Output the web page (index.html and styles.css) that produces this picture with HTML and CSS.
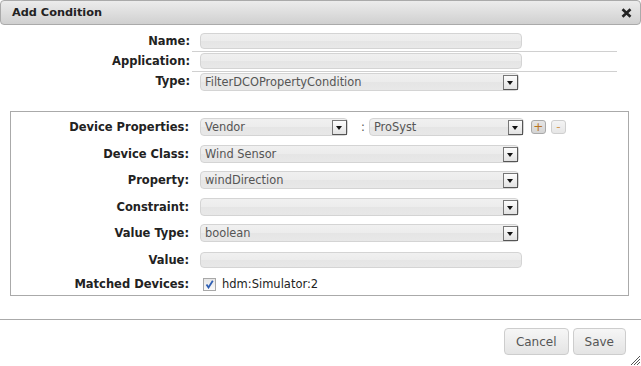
FILE: index.html
```html
<!DOCTYPE html>
<html lang="en">
<head>
  <meta charset="UTF-8" />
  <title>Add Condition</title>
  <link rel="stylesheet" href="styles.css">
</head>
<body>

<div class="dialog">

  <div class="titlebar">
    <span class="title">Add Condition</span>
    <span class="close">
      <svg width="11" height="10" viewBox="0 0 11 10"><path d="M1.5 1.2 L9.5 8.8 M9.5 1.2 L1.5 8.8" stroke="#222" stroke-width="2.6" fill="none"/></svg>
    </span>
  </div>

  <div class="content">

    <div class="top">
      <div class="row">
        <label>Name:</label>
        <div class="cell"><div class="input"></div></div>
      </div>
      <div class="row">
        <label>Application:</label>
        <div class="cell"><div class="input"></div></div>
      </div>
      <div class="row last">
        <label>Type:</label>
        <div class="cell"><div class="select">FilterDCOPropertyCondition<span class="arrow"></span></div></div>
      </div>
    </div>

    <div class="box">
      <div class="frow">
        <label>Device Properties:</label>
        <div class="field">
          <div class="select small">Vendor<span class="arrow"></span></div>
          <span class="colon">:</span>
          <div class="select mid">ProSyst<span class="arrow"></span></div>
          <button class="mini plus">+</button>
          <button class="mini minus">-</button>
        </div>
      </div>
      <div class="frow">
        <label>Device Class:</label>
        <div class="field"><div class="select">Wind Sensor<span class="arrow"></span></div></div>
      </div>
      <div class="frow">
        <label>Property:</label>
        <div class="field"><div class="select">windDirection<span class="arrow"></span></div></div>
      </div>
      <div class="frow">
        <label>Constraint:</label>
        <div class="field"><div class="select"><span class="arrow"></span></div></div>
      </div>
      <div class="frow">
        <label>Value Type:</label>
        <div class="field"><div class="select">boolean<span class="arrow"></span></div></div>
      </div>
      <div class="frow">
        <label>Value:</label>
        <div class="field"><div class="input wide"></div></div>
      </div>
      <div class="frow check">
        <label>Matched Devices:</label>
        <div class="field">
          <span class="checkbox">
            <svg width="9" height="9" viewBox="0 0 9 9"><path d="M1.5 4.5 L3.5 7.5 L7.8 0.8" stroke="#2f5fb3" stroke-width="1.8" fill="none"/></svg>
          </span>
          <span class="device">hdm:Simulator:2</span>
        </div>
      </div>
    </div>

  </div>

  <div class="buttonpane">
    <button class="btn">Cancel</button>
    <button class="btn">Save</button>
  </div>

  <svg class="grip" width="11" height="11" viewBox="0 0 11 11">
    <path d="M10 1 L1 10 M10 4 L4 10 M10 7 L7 10" stroke="#555" stroke-width="1" fill="none"/>
  </svg>

</div>

</body>
</html>
```

FILE: styles.css
```css
* {
  box-sizing: border-box;
}
body {
  margin: 0;
  background: #fff;
  font-family: 'DejaVu Sans', Verdana, sans-serif;
  font-size: 11.5px;
  color: #222;
}
.dialog {
  position: relative;
  width: 641px;
  height: 366px;
  overflow: hidden;
}
.titlebar {
  height: 25px;
  border: 1px solid #aaa;
  border-radius: 4px;
  background: linear-gradient(#ececec, #d0d0d0);
  display: flex;
  align-items: center;
  justify-content: space-between;
  padding: 0 8px 0 11px;
}
.title {
  font-weight: bold;
  font-size: 11.3px;
  color: #222;
}
.close {
  display: flex;
  margin-top: 1px;
}
.content {
  padding-top: 7px;
}

/* upper form */
.row {
  display: flex;
}
.row label {
  width: 190px;
  text-align: right;
  font-weight: bold;
  line-height: 17px;
  padding-top: 1px;
}
.cell {
  margin-left: 2px;
  width: 425px;
  padding: 1px 0 2px 8px;
  border-bottom: 1px solid #d0d0d0;
}
.row.last .cell {
  border-bottom: none;
}

.input {
  width: 322px;
  height: 16px;
  border: 1px solid #d4d4d4;
  border-radius: 4px;
  background: linear-gradient(#f0f0f0 0%, #ececec 50%, #e5e5e5 50%, #e8e8e8 100%);
}
.select {
  position: relative;
  width: 319px;
  height: 18px;
  border: 1px solid #d4d4d4;
  border-radius: 4px;
  background: linear-gradient(#f0f0f0 0%, #ececec 50%, #e5e5e5 50%, #e8e8e8 100%);
  color: #555;
  font-size: 11.4px;
  line-height: 16px;
  padding-left: 4px;
  white-space: nowrap;
}
.select.small {
  width: 148px;
}
.select.mid {
  width: 155px;
}
.arrow {
  position: absolute;
  right: 0;
  top: 1px;
  width: 15px;
  height: 15px;
  border: 1px solid #777;
  border-right-color: #555;
  border-bottom-color: #555;
  background: linear-gradient(#fdfdfd, #e2e2e2);
}
.arrow::after {
  content: '';
  position: absolute;
  left: 3px;
  top: 5px;
  border-left: 3.5px solid transparent;
  border-right: 3.5px solid transparent;
  border-top: 4px solid #111;
}

/* condition box */
.box {
  margin: 18px 0 0 10px;
  width: 619px;
  border: 1px solid #aaa;
  padding: 6px 0 4px;
  display: flex;
  flex-direction: column;
  gap: 8.5px;
}
.frow {
  display: flex;
  align-items: center;
  height: 18px;
}
.frow label {
  width: 178px;
  text-align: right;
  font-weight: bold;
}
.field {
  margin-left: 11px;
  display: flex;
  align-items: center;
}
.colon {
  margin: 0 4px 0 13px;
  color: #555;
}
.mini {
  margin-left: 7px;
  width: 15px;
  height: 14px;
  padding: 0;
  border: 1px solid #a9a9a9;
  border-radius: 3px;
  font-family: inherit;
  font-size: 12px;
  line-height: 11px;
  color: #b8741f;
  background: linear-gradient(#e6e6e6, #d4d4d4);
}
.mini.minus {
  margin-left: 5px;
  color: #d29a55;
  background: linear-gradient(#f4f4f4, #e6e6e6);
  border-color: #cfcfcf;
}
.frow.check {
  height: 14px;
}
.checkbox {
  margin-left: 3px;
  width: 13px;
  height: 13px;
  border: 1px solid #a8a8a8;
  background: linear-gradient(#e6e6e6, #fafafa);
  display: flex;
  align-items: center;
  justify-content: center;
}
.device {
  margin-left: 6px;
  font-size: 11.5px;
  color: #222;
}

/* buttons */
.buttonpane {
  margin-top: 23px;
  border-top: 1px solid #aaa;
  display: flex;
  justify-content: flex-end;
  gap: 4px;
  padding: 8px 15px 0 0;
}
.btn {
  height: 27px;
  padding: 0 11px;
  border: 1px solid #cdcdcd;
  border-radius: 4px;
  background: linear-gradient(#f6f6f6, #e4e4e4);
  font-family: inherit;
  font-size: 12px;
  color: #555;
}
.grip {
  position: absolute;
  right: 0;
  bottom: 0;
}
```
